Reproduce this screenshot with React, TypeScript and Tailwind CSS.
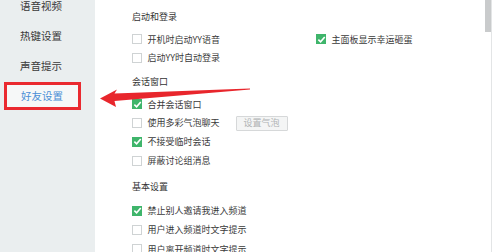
const navItems = ['语音视频', '热键设置', '声音提示'];

const CheckBox = ({ checked }: { checked?: boolean }) => (
  checked ? (
    <span className="w-[10px] h-[10px] shrink-0 bg-[#3fb56b] flex items-center justify-center">
      <svg width="9" height="9" viewBox="0 0 10 10">
        <path d="M1.5 5.2 L4 7.6 L8.6 2.2" fill="none" stroke="#fff" strokeWidth="1.8" />
      </svg>
    </span>
  ) : (
    <span className="w-[10px] h-[10px] shrink-0 border border-[#cfd3d4] bg-white" />
  )
);

const Option = ({ label, checked }: { label: string; checked?: boolean }) => (
  <div className="flex items-center gap-[5.5px] text-[9px] text-[#3a3a3a]">
    <CheckBox checked={checked} />
    <span>{label}</span>
  </div>
);

const Heading = ({ children, className = '' }: { children: string; className?: string }) => (
  <div className={`h-[20px] flex items-center text-[9px] text-[#333] ${className}`}>{children}</div>
);

const App = () => {
  return (
    <div
      className="relative w-[492px] h-[252px] flex overflow-hidden bg-white"
      style={{ fontFamily: '"Noto Sans CJK SC", "Noto Sans", sans-serif' }}
    >
      {/* sidebar */}
      <div className="w-[95px] shrink-0 bg-[#eaeeef] flex flex-col -mt-[9px] text-[10.5px] text-[#3a3a3a]">
        {navItems.map((n) => (
          <div key={n} className="h-[30px] flex items-center pl-[20px]">{n}</div>
        ))}
        <div className="ml-[4px] mt-[1px] w-[77px] h-[28px] border-[3px] border-[#ea2a30] bg-[#f6f8f8] flex items-center pl-[14px] text-[#4a8fd6]">
          好友设置
        </div>
      </div>

      {/* settings */}
      <div className="flex-1 pl-[37px] pt-[7px]">
        <Heading>启动和登录</Heading>
        <div className="mt-[3px] flex flex-col">
          <div className="h-[18.5px] flex items-center">
            <div className="w-[184px]"><Option label="开机时启动YY语音" /></div>
            <Option label="主面板显示幸运砸蛋" checked />
          </div>
          <div className="h-[18.5px] flex items-center"><Option label="启动YY时自动登录" /></div>
        </div>

        <Heading className="mt-[5px]">会话窗口</Heading>
        <div className="mt-[3px] flex flex-col">
          <div className="h-[18.8px] flex items-center"><Option label="合并会话窗口" checked /></div>
          <div className="h-[18.8px] flex items-center gap-[16px]">
            <Option label="使用多彩气泡聊天" />
            <span className="w-[52px] h-[15px] border border-[#d6d8d9] bg-[#f4f5f5] rounded-[1px] text-[9px] text-[#b0b3b4] flex items-center justify-center">设置气泡</span>
          </div>
          <div className="h-[18.8px] flex items-center"><Option label="不接受临时会话" checked /></div>
          <div className="h-[18.8px] flex items-center"><Option label="屏蔽讨论组消息" /></div>
        </div>

        <Heading className="mt-[7px]">基本设置</Heading>
        <div className="mt-[4px] flex flex-col">
          <div className="h-[19.3px] flex items-center"><Option label="禁止别人邀请我进入频道" checked /></div>
          <div className="h-[19.3px] flex items-center"><Option label="用户进入频道时文字提示" /></div>
          <div className="h-[19.3px] flex items-center"><Option label="用户离开频道时文字提示" /></div>
        </div>
      </div>

      {/* scrollbar */}
      <div className="w-[8px] shrink-0 border-r border-[#e3e5e6] flex flex-col">
        <div className="ml-[1px] w-[6px] h-[32px] bg-[#c9cbcc]" />
      </div>

      {/* annotation arrow */}
      <svg className="absolute left-0 top-0 pointer-events-none" width="492" height="252">
        <polygon
          points="100,98.5 117,89.5 114.5,93.5 250,88.4 250,89.6 114.5,101 116,107"
          fill="#e8262c"
        />
      </svg>
    </div>
  );
};

export default App;
